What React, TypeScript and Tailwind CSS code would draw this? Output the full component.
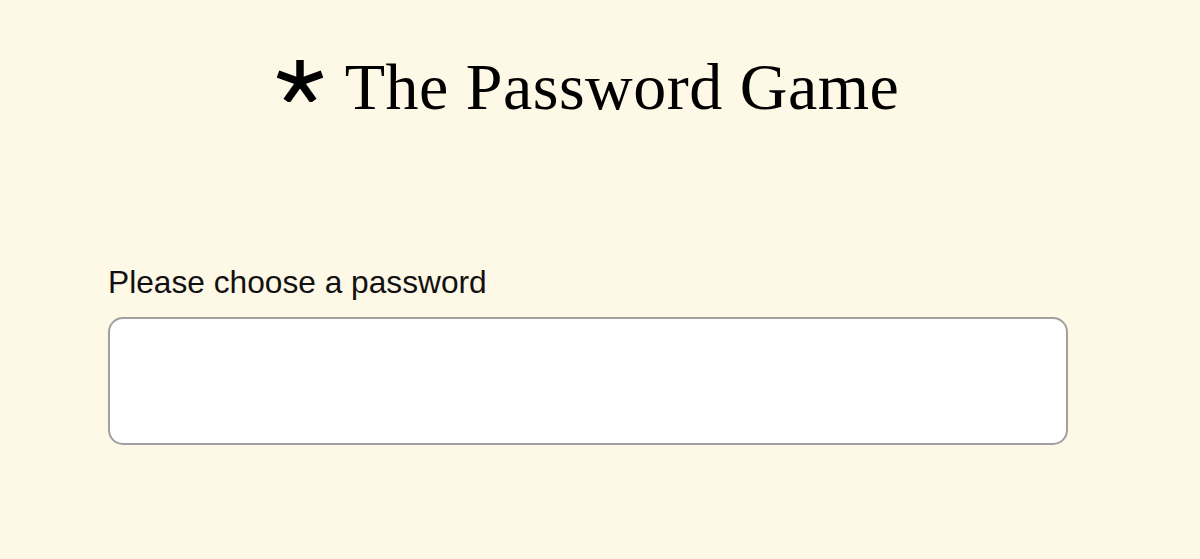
function Asterisk() {
  return (
    <svg width="46" height="42" viewBox="0 0 46 42" className="shrink-0">
      <g stroke="#000" strokeWidth="7.5" strokeLinecap="butt">
        <line x1="23" y1="22" x2="23" y2="0" />
        <line x1="23" y1="22" x2="1" y2="14" />
        <line x1="23" y1="22" x2="45" y2="14" />
        <line x1="23" y1="22" x2="9.5" y2="41" />
        <line x1="23" y1="22" x2="36.5" y2="41" />
      </g>
    </svg>
  );
}

export default function App() {
  return (
    <div className="min-h-[559px] w-full bg-[#fef8e7] pr-[24px]">
      <div className="mx-auto w-[960px] pt-[54px]">
        {/* title */}
        <h1 className="flex items-center justify-center gap-[22px] text-black">
          <span className="-mt-[12px]">
            <Asterisk />
          </span>
          <span className="font-['Liberation_Serif',serif] text-[66px] leading-none tracking-[0.5px]">The Password Game</span>
        </h1>

        {/* password input */}
        <div className="mt-[147px]">
          <label className="block font-['Liberation_Sans',sans-serif] text-[31.7px] leading-none text-[#111] mb-[18px]">
            Please choose a password
          </label>
          <div className="h-[128px] w-full rounded-[15px] border-2 border-[#a0a0a0] bg-white" />
        </div>
      </div>
    </div>
  );
}
